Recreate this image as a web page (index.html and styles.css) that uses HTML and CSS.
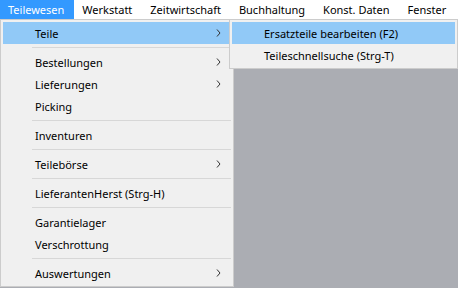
FILE: index.html
```html
<!DOCTYPE html>
<html lang="de">
<head>
<meta charset="utf-8">
<link rel="stylesheet" href="styles.css">
</head>
<body>
<nav class="menubar">
  <span class="mb-item active">Teilewesen</span>
  <span class="mb-item">Werkstatt</span>
  <span class="mb-item">Zeitwirtschaft</span>
  <span class="mb-item">Buchhaltung</span>
  <span class="mb-item">Konst. Daten</span>
  <span class="mb-item">Fenster</span>
</nav>
<main class="workspace">
  <ul class="menu main-menu">
    <li class="item hot"><span>Teile</span><svg class="arrow" viewBox="0 0 5 8"><path d="M1 0.5 L4 4 L1 7.5" fill="none" stroke="#333" stroke-width="1"/></svg></li>
    <li class="sep"></li>
    <li class="item"><span>Bestellungen</span><svg class="arrow" viewBox="0 0 5 8"><path d="M1 0.5 L4 4 L1 7.5" fill="none" stroke="#333" stroke-width="1"/></svg></li>
    <li class="item"><span>Lieferungen</span><svg class="arrow" viewBox="0 0 5 8"><path d="M1 0.5 L4 4 L1 7.5" fill="none" stroke="#333" stroke-width="1"/></svg></li>
    <li class="item"><span>Picking</span></li>
    <li class="sep"></li>
    <li class="item"><span>Inventuren</span></li>
    <li class="sep"></li>
    <li class="item"><span>Teilebörse</span><svg class="arrow" viewBox="0 0 5 8"><path d="M1 0.5 L4 4 L1 7.5" fill="none" stroke="#333" stroke-width="1"/></svg></li>
    <li class="sep"></li>
    <li class="item"><span>LieferantenHerst (Strg-H)</span></li>
    <li class="sep"></li>
    <li class="item"><span>Garantielager</span></li>
    <li class="item"><span>Verschrottung</span></li>
    <li class="sep"></li>
    <li class="item"><span>Auswertungen</span><svg class="arrow" viewBox="0 0 5 8"><path d="M1 0.5 L4 4 L1 7.5" fill="none" stroke="#333" stroke-width="1"/></svg></li>
  </ul>
  <ul class="menu sub-menu">
    <li class="item hot"><span>Ersatzteile bearbeiten (F2)</span></li>
    <li class="item"><span>Teileschnellsuche (Strg-T)</span></li>
  </ul>
</main>
</body>
</html>
```
FILE: styles.css
```css
html, body {
  margin: 0;
  padding: 0;
  height: 100%;
}
body {
  font-family: "Noto Sans", "Open Sans", sans-serif;
  font-size: 11px;
  color: #000;
  background: #abadb3;
  display: flex;
  flex-direction: column;
  overflow: hidden;
}
.menubar {
  display: flex;
  height: 19px;
  background: #ffffff;
  align-items: stretch;
  white-space: nowrap;
}
.mb-item {
  display: flex;
  align-items: center;
  padding: 0 10px 0 8px;
  flex-shrink: 0;
}
.mb-item.active {
  background: #3399ff;
  color: #fff;
}
.workspace {
  position: relative;
  flex: 1;
}
.menu {
  position: absolute;
  top: 0;
  margin: 0;
  padding: 2px;
  list-style: none;
  background: #f0f0f0;
  border: 1px solid #cccccc;
  box-sizing: border-box;
  white-space: nowrap;
}
.main-menu {
  left: 0;
  width: 234px;
}
.sub-menu {
  left: 229px;
  width: 229px;
}
.item {
  height: 22px;
  display: flex;
  align-items: center;
  padding-left: 32px;
  position: relative;
}
.item.hot {
  background: #91c9f7;
}
.arrow {
  position: absolute;
  right: 10px;
  top: 7px;
  width: 5px;
  height: 8px;
}
.sep {
  height: 1px;
  margin: 3px 0 3px 29px;
  background: #d7d7d7;
}
```
